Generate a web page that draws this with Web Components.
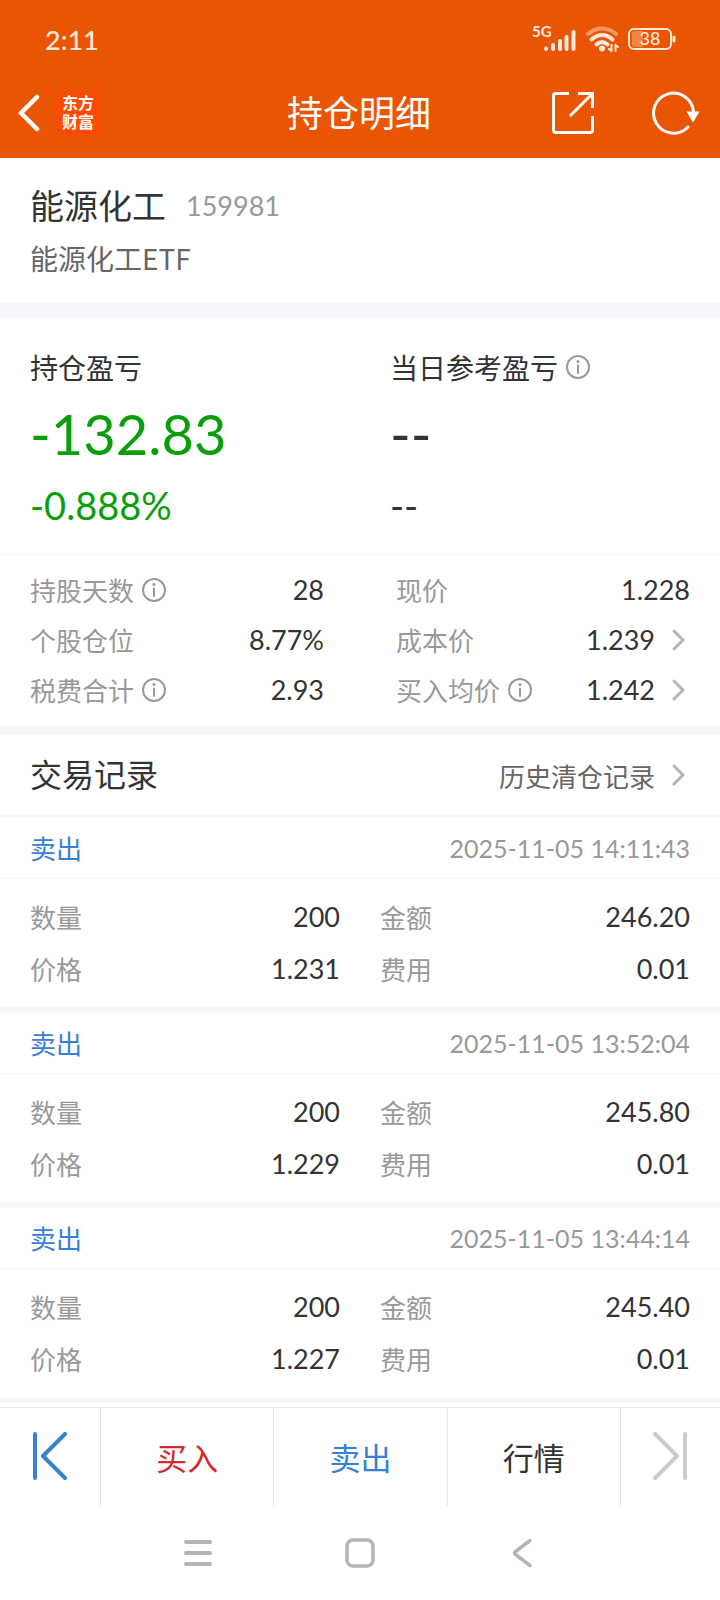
<!DOCTYPE html>
<html lang="zh-CN">
<head>
<meta charset="utf-8">
<meta name="viewport" content="width=device-width, initial-scale=1">
<title>持仓明细</title>
<style>
  :root {
    --brand: #ea5504;
    --text: #333;
    --text-2: #666;
    --text-3: #999;
    --blue: #3680d6;
    --red: #d62828;
    --green: #0a9f0a;
    --band: #f5f7fa;
    --line: #f4f4f5;
    --gutter: 30px;
    --num: Lato, "Noto Sans CJK SC", sans-serif;
  }
  body {
    margin: 0;
    background: #fff;
    color: var(--text);
    font-family: "Noto Sans CJK SC", sans-serif;
    font-size: 26px;
  }
</style>
</head>
<body>
<position-page></position-page>

<script>
const reset = /* css */`
  * { box-sizing: border-box; }
  svg { display: block; flex: none; fill: none; stroke-linecap: round; stroke-linejoin: round; }
  button, a { font: inherit; color: inherit; text-decoration: none; }
  button { display: flex; align-items: center; justify-content: center; margin: 0; padding: 0; border: 0; background: none; }
`;

class BaseElement extends HTMLElement {
  constructor() {
    super();
    this.attachShadow({ mode: 'open' });
  }

  connectedCallback() {
    const template = document.createElement('template');
    template.innerHTML = `<style>${reset}${this.constructor.styles}</style>${this.html()}`;
    this.shadowRoot.replaceChildren(template.content.cloneNode(true));
  }
}

class StatusBar extends BaseElement {
  static get styles() {
    return /* css */`
      :host { display: flex; align-items: center; justify-content: space-between; height: 68px; padding: 10px 44px 0 45px; background: var(--brand); color: #ffe9dc; font-family: var(--num); }
      time { font-size: 27px; font-weight: 500; }
      .icons { display: flex; align-items: center; gap: 9px; }
      text { fill: currentColor; stroke: none; font-weight: 700; }
      .charge { font-weight: 500; }
    `;
  }

  html() {
    return /* html */`
      <time>2:11</time>
      <div class="icons">
        <svg width="44" height="38" viewBox="0 -6 44 38" stroke="currentColor" stroke-width="4">
          <text x="0" y="11" font-size="15">5G</text>
          <path d="M14 22.500v.5M21 19v4M28 15v8M34.500 11v12M41.500 6v17"/>
        </svg>
        <svg width="34" height="26" viewBox="0 0 34 26" stroke="currentColor" stroke-width="4">
          <path d="M3 8q14-11 28 0" opacity=".45"/>
          <path d="M6.500 13.500q10.500-9 21 0M11.500 18.500q5.500-5 11 0"/>
          <circle cx="17" cy="22.500" r="3" fill="currentColor" stroke="none"/>
          <path d="M26.500 19v6l-2.500-2M30.500 25v-6l2.500 2" stroke-width="2"/>
        </svg>
        <svg width="48" height="22" viewBox="0 0 48 22">
          <path d="M7 3h8v16H7q-3 0-3-3V6q0-3 3-3z" fill="#f58545"/>
          <rect x="1" y="1" width="42" height="20" rx="5" stroke="currentColor" stroke-width="2"/>
          <path d="M46 9v4" stroke="currentColor" stroke-width="3"/>
          <text class="charge" x="22" y="17" font-size="18" text-anchor="middle">38</text>
        </svg>
      </div>
    `;
  }
}

class NavHeader extends BaseElement {
  static get styles() {
    return /* css */`
      :host { display: grid; grid-template-columns: 1fr auto 1fr; align-items: center; height: 90px; padding: 0 20px 0 18px; background: var(--brand); color: #fff; }
      .side { display: flex; align-items: center; gap: 16px; }
      .actions { justify-content: flex-end; gap: 56px; }
      h1 { margin: 0; padding-bottom: 4px; font-size: 36px; font-weight: 400; line-height: 48px; }
      .logo { display: flex; align-items: center; justify-content: center; width: 44px; height: 44px; padding-bottom: 2px; border-radius: 9px; background: #ff4a02; font-size: 16px; font-weight: 700; line-height: 19px; }
      .logo span { width: 2em; }
    `;
  }

  html() {
    return /* html */`
      <div class="side">
        <button aria-label="返回">
          <svg width="22" height="38" viewBox="0 0 22 38" stroke="currentColor" stroke-width="4.500"><path d="M19 3 3 19l16 16"/></svg>
        </button>
        <a class="logo" href="#"><span>东方财富</span></a>
      </div>
      <h1><slot></slot></h1>
      <div class="side actions">
        <button aria-label="分享">
          <svg width="44" height="44" viewBox="0 0 44 44" stroke="currentColor" stroke-width="3" style="stroke-linecap:butt;stroke-linejoin:miter">
            <path d="M18 2.500H5q-2.500 0-2.500 2.500v34q0 2.500 2.500 2.500h34q2.500 0 2.500-2.500V25M27 2.500h14.500V17M41 3 19 25"/>
          </svg>
        </button>
        <button aria-label="刷新">
          <svg width="49" height="44" viewBox="0 0 49 44" stroke="currentColor" stroke-width="3">
            <path d="M37 36A20 20 0 1 1 42.500 21"/>
            <path d="M35.500 20.500h13l-6.500 11z" fill="currentColor" stroke="none"/>
          </svg>
        </button>
      </div>
    `;
  }
}

class InfoButton extends BaseElement {
  static get styles() {
    return /* css */`
      :host { display: inline-flex; color: var(--text-3); }
    `;
  }

  html() {
    return /* html */`
      <button aria-label="说明">
        <svg width="24" height="24" viewBox="0 0 24 24" stroke="currentColor" stroke-width="2">
          <circle cx="12" cy="12" r="11"/>
          <path d="M12 10.500v7.500"/>
          <circle cx="12" cy="6.500" r="1.500" fill="currentColor" stroke="none"/>
        </svg>
      </button>
    `;
  }
}

class ChevronIcon extends BaseElement {
  static get styles() {
    return /* css */`
      :host { display: inline-flex; padding-right: 5px; color: #b5b5b5; }
    `;
  }

  html() {
    return /* html */`
      <svg width="13" height="22" viewBox="0 0 13 22" stroke="currentColor" stroke-width="3"><path d="M2 2l9 9-9 9"/></svg>
    `;
  }
}

class FundTitle extends BaseElement {
  static get styles() {
    return /* css */`
      :host { display: block; padding: 22px var(--gutter); border-bottom: 16px solid var(--band); }
      .row { display: flex; align-items: center; gap: 20px; }
      h2 { margin: 0; font-size: 34px; font-weight: 400; line-height: 50px; }
      .code { color: var(--text-3); font-family: var(--num); font-size: 27px; }
      p { margin: 8px 0 2px; color: var(--text-2); font-size: 28px; line-height: 40px; }
    `;
  }

  html() {
    return /* html */`
      <div class="row"><h2><slot></slot></h2><span class="code">${this.getAttribute('code')}</span></div>
      <p>${this.getAttribute('name')}</p>
    `;
  }
}

class ProfitCard extends BaseElement {
  static get styles() {
    return /* css */`
      :host { display: block; padding: 28px 0 24px var(--gutter); }
      .label { display: flex; align-items: center; gap: 8px; font-size: 28px; line-height: 42px; }
      .amount, .rate { font-family: var(--num); }
      .amount { font-size: 56px; line-height: 92px; }
      .rate { font-size: 38px; line-height: 50px; }
      :host([trend="down"]) :is(.amount, .rate) { color: var(--green); }
    `;
  }

  html() {
    return /* html */`
      <div class="label"><slot></slot></div>
      <div class="amount">${this.getAttribute('amount')}</div>
      <div class="rate">${this.getAttribute('rate')}</div>
    `;
  }
}

class StatItem extends BaseElement {
  static get styles() {
    return /* css */`
      :host { display: flex; align-items: center; justify-content: space-between; height: var(--row, 50px); line-height: 40px; }
      .label, .value { display: flex; align-items: center; }
      .label { gap: 8px; color: var(--text-3); font-size: 26px; }
      .value { gap: 17px; font-family: var(--num); font-size: 27px; }
    `;
  }

  html() {
    const value = this.getAttribute('value');
    const info = this.hasAttribute('info') ? '<info-button></info-button>' : '';
    return /* html */`
      <span class="label"><slot></slot>${info}</span>
      ${this.hasAttribute('link')
        ? `<a class="value" href="#">${value}<chevron-icon></chevron-icon></a>`
        : `<span class="value">${value}</span>`}
    `;
  }
}

class SectionHead extends BaseElement {
  static get styles() {
    return /* css */`
      :host { display: flex; align-items: center; justify-content: space-between; height: 83px; padding: 0 var(--gutter); border-bottom: 3px solid var(--band); box-sizing: border-box; }
      h2 { margin: 0; padding-bottom: 4px; font-size: 32px; font-weight: 400; }
      a { display: flex; align-items: center; gap: 17px; color: var(--text-2); font-size: 26px; }
    `;
  }

  html() {
    return /* html */`
      <h2><slot></slot></h2>
      <a href="#">${this.getAttribute('link')}<chevron-icon></chevron-icon></a>
    `;
  }
}

class TradeRecord extends BaseElement {
  static get styles() {
    return /* css */`
      :host { display: block; border-bottom: 6px solid var(--band); }
      header { display: flex; align-items: center; justify-content: space-between; height: 61px; padding: 0 var(--gutter); border-bottom: 1px solid var(--line); }
      .side { padding-bottom: 2px; color: var(--blue); }
      time { color: var(--text-3); font-family: var(--num); font-size: 25px; }
      .body { --row: 52px; display: grid; grid-template-columns: 1fr 1fr; column-gap: 40px; padding: 12px var(--gutter); }
    `;
  }

  html() {
    const [count, amount, price, fee] = this.getAttribute('values').split(' ');
    return /* html */`
      <header><span class="side"><slot></slot></span><time>${this.getAttribute('time')}</time></header>
      <div class="body">
        <stat-item value="${count}">数量</stat-item>
        <stat-item value="${amount}">金额</stat-item>
        <stat-item value="${price}">价格</stat-item>
        <stat-item value="${fee}">费用</stat-item>
      </div>
    `;
  }
}

class TradeBar extends BaseElement {
  static get styles() {
    return /* css */`
      :host { display: grid; grid-template-columns: 100px 1fr 1fr 1fr 100px; height: 99px; border-top: 1px solid #e8e8e8; font-size: 31px; }
      button { padding-bottom: 2px; }
      button + button { border-left: 1px solid #e8e8e8; }
      .prev, .sell { color: var(--blue); }
      .buy { color: var(--red); }
      .next { color: #ccc; }
    `;
  }

  html() {
    return /* html */`
      <button class="prev" aria-label="上一个">
        <svg width="34" height="48" viewBox="0 0 34 48" stroke="currentColor" stroke-width="4"><path d="M2 2v44M32 2 10 24l22 22"/></svg>
      </button>
      <button class="buy">买入</button>
      <button class="sell">卖出</button>
      <button>行情</button>
      <button class="next" aria-label="下一个">
        <svg width="34" height="48" viewBox="0 0 34 48" stroke="currentColor" stroke-width="4"><path d="M32 2v44M2 2l22 22L2 46"/></svg>
      </button>
    `;
  }
}

class SystemNav extends BaseElement {
  static get styles() {
    return /* css */`
      :host { display: flex; align-items: center; justify-content: center; gap: 132px; height: 94px; color: #b5b5b5; }
    `;
  }

  html() {
    return /* html */`
      <button aria-label="最近任务">
        <svg width="30" height="30" viewBox="0 0 30 30" stroke="currentColor" stroke-width="4"><path d="M3 4h24M3 15h24M3 26h24"/></svg>
      </button>
      <button aria-label="主屏幕">
        <svg width="30" height="30" viewBox="0 0 30 30" stroke="currentColor" stroke-width="3.500"><rect x="2" y="2" width="26" height="26" rx="6"/></svg>
      </button>
      <button aria-label="返回">
        <svg width="30" height="30" viewBox="0 0 30 30" stroke="currentColor" stroke-width="3.500"><path d="M23 2.500 8.500 13.500q-2 1.500 0 3L23 27.500"/></svg>
      </button>
    `;
  }
}

class PositionPage extends BaseElement {
  static get styles() {
    return /* css */`
      :host { display: flex; flex-direction: column; min-height: 100vh; }
      main { flex: 1; }
      .profit { display: grid; grid-template-columns: 1fr 1fr; border-bottom: 1px solid var(--line); }
      .stats { display: grid; grid-template-columns: 1fr 1fr; column-gap: 72px; padding: 10px var(--gutter); border-bottom: 10px solid var(--band); }
    `;
  }

  html() {
    return /* html */`
      <status-bar></status-bar>
      <nav-header>持仓明细</nav-header>
      <main>
        <fund-title code="159981" name="能源化工ETF">能源化工</fund-title>
        <section class="profit">
          <profit-card trend="down" amount="-132.83" rate="-0.888%">持仓盈亏</profit-card>
          <profit-card amount="--" rate="--">当日参考盈亏<info-button></info-button></profit-card>
        </section>
        <section class="stats">
          <stat-item info value="28">持股天数</stat-item>
          <stat-item value="1.228">现价</stat-item>
          <stat-item value="8.77%">个股仓位</stat-item>
          <stat-item link value="1.239">成本价</stat-item>
          <stat-item info value="2.93">税费合计</stat-item>
          <stat-item info link value="1.242">买入均价</stat-item>
        </section>
        <section-head link="历史清仓记录">交易记录</section-head>
        <trade-record time="2025-11-05 14:11:43" values="200 246.20 1.231 0.01">卖出</trade-record>
        <trade-record time="2025-11-05 13:52:04" values="200 245.80 1.229 0.01">卖出</trade-record>
        <trade-record time="2025-11-05 13:44:14" values="200 245.40 1.227 0.01">卖出</trade-record>
      </main>
      <trade-bar></trade-bar>
      <system-nav></system-nav>
    `;
  }
}

customElements.define('status-bar', StatusBar);
customElements.define('nav-header', NavHeader);
customElements.define('info-button', InfoButton);
customElements.define('chevron-icon', ChevronIcon);
customElements.define('fund-title', FundTitle);
customElements.define('profit-card', ProfitCard);
customElements.define('stat-item', StatItem);
customElements.define('section-head', SectionHead);
customElements.define('trade-record', TradeRecord);
customElements.define('trade-bar', TradeBar);
customElements.define('system-nav', SystemNav);
customElements.define('position-page', PositionPage);
</script>
</body>
</html>
